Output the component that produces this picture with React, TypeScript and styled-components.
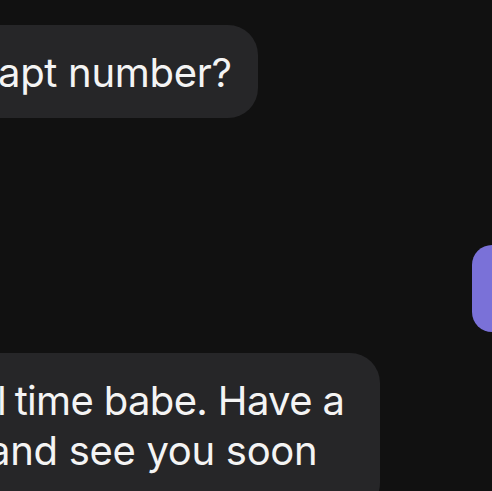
import styled, { createGlobalStyle } from 'styled-components'

const GlobalStyle = createGlobalStyle`
  html, body {
    margin: 0;
    padding: 0;
    background: #111111;
  }
  body {
    font-family: Inter, 'Noto Sans', 'Liberation Sans', sans-serif;
    -webkit-font-smoothing: antialiased;
  }
`

const Thread = styled.div`
  width: 492px;
  height: 491px;
  overflow: hidden;
  background: #111111;
  display: flex;
  flex-direction: column;
  padding-top: 25px;
  box-sizing: border-box;
`

const Row = styled.div<{ $out?: boolean; $gap: number }>`
  display: flex;
  justify-content: ${(p) => (p.$out ? 'flex-end' : 'flex-start')};
  margin-top: ${(p) => p.$gap}px;
`

const Bubble = styled.div<{ $out?: boolean; $w: number; $h?: number; $top?: number }>`
  box-sizing: border-box;
  width: ${(p) => p.$w}px;
  min-height: ${(p) => (p.$h ? `${p.$h}px` : 'auto')};
  padding-top: ${(p) => p.$top ?? 0}px;
  flex-shrink: 0;
  background: ${(p) => (p.$out ? '#7a71d8' : '#262628')};
  color: #f4f4f4;
  border-radius: ${(p) => (p.$out ? '30px 0 0 30px' : '0 30px 30px 0')};
  font-size: 40px;
  line-height: 50px;
  letter-spacing: -0.3px;
  white-space: nowrap;
  overflow: hidden;
`

const Line = styled.div<{ $shift: number; $tight?: boolean }>`
  margin-left: ${(p) => p.$shift}px;
  letter-spacing: ${(p) => (p.$tight ? '-0.65px' : 'inherit')};
`

const Cut = styled.span`
  margin-right: -2px;
`

export default function App() {
  return (
    <>
      <GlobalStyle />
      <Thread>
        <Row $gap={0}>
          <Bubble $w={258} $h={93} $top={23}>
            <Line $shift={-2}>apt number?</Line>
          </Bubble>
        </Row>
        <Row $out $gap={127}>
          <Bubble $out $w={20} $h={87} />
        </Row>
        <Row $gap={21}>
          <Bubble $w={380} $h={160} $top={23}>
            <Line $shift={-3} $tight>
              <Cut>l</Cut> time babe. Have a
            </Line>
            <Line $shift={-12}>and see you soon</Line>
          </Bubble>
        </Row>
      </Thread>
    </>
  )
}
